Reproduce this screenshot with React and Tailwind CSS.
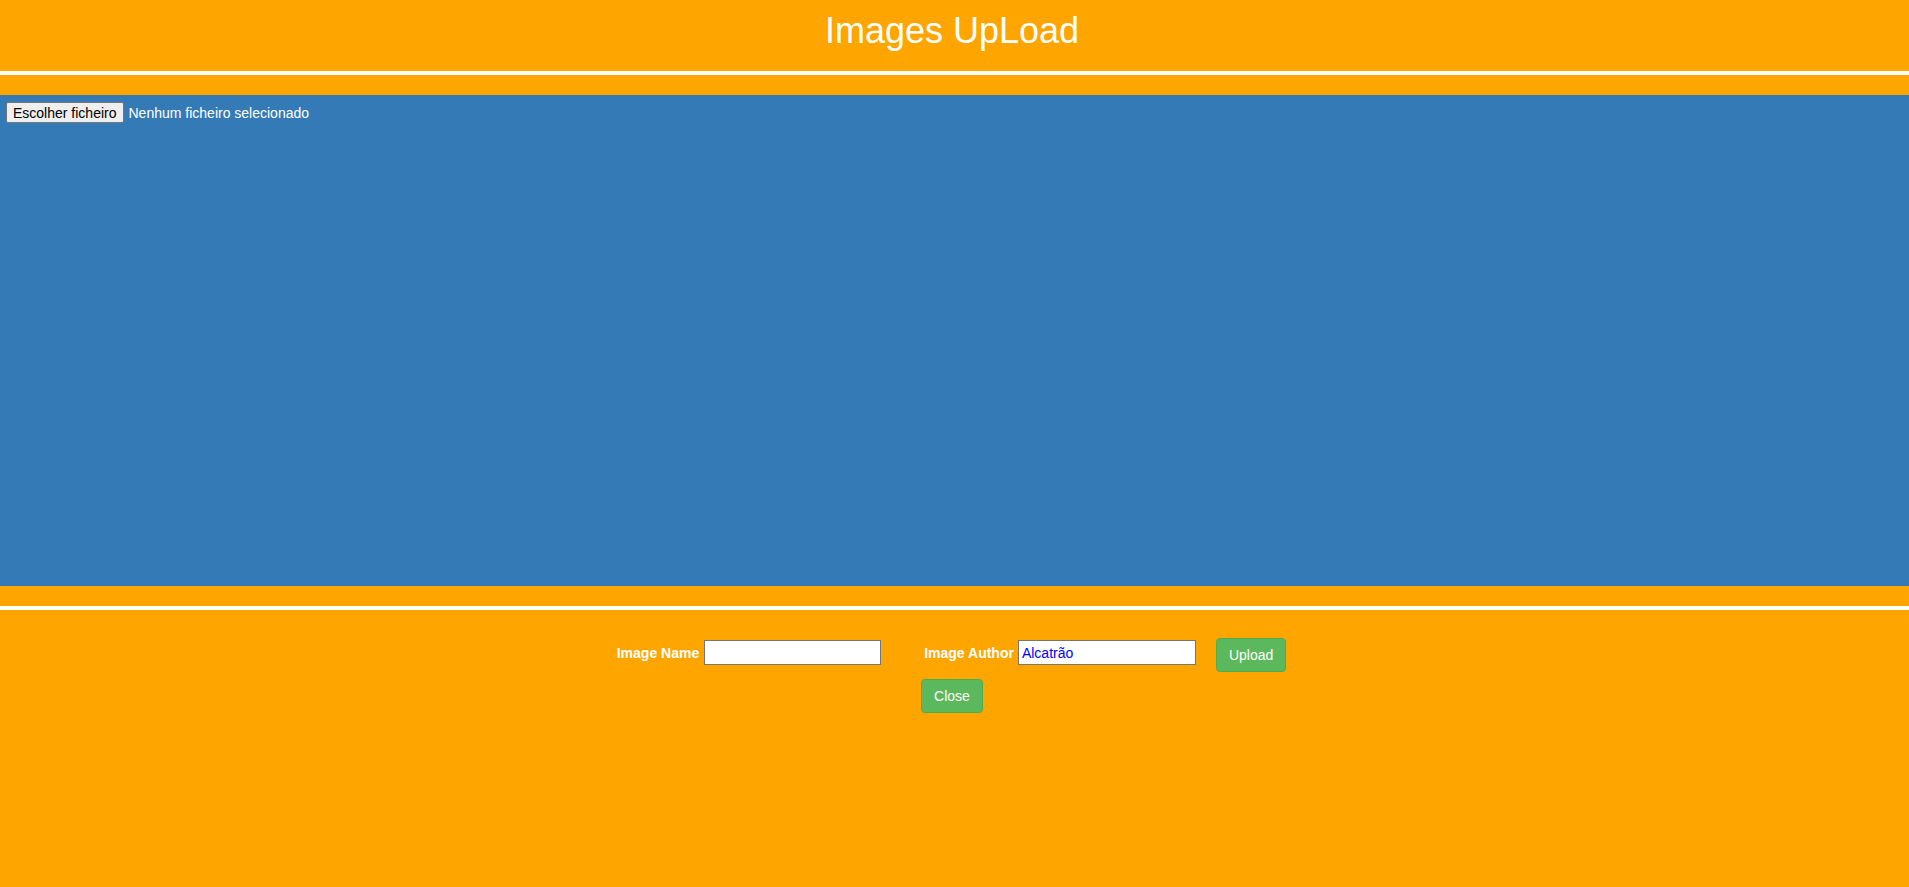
import React, { useState } from 'react';

export default function App() {
  const [name, setName] = useState('');
  const [author, setAuthor] = useState('Alcatrão');

  return (
    <div className="min-h-screen bg-[#ffa500] font-['Liberation_Sans',Arial,sans-serif] text-white">
      {/* Header */}
      <div className="h-[71px] pt-[11px] pr-[5px] text-center">
        <h1 className="text-[36px] leading-[40px] font-normal">Images UpLoad</h1>
      </div>
      <div className="h-[4px] bg-white" />
      <div className="h-[20px]" />

      {/* Upload area */}
      <div className="h-[491px] bg-[#337ab7] pt-[7px] pl-[6px]">
        <div className="flex items-center">
          <button className="h-[21px] px-[6px] bg-[#efefef] border border-[#767676] rounded-[2px] text-black text-[14px] leading-[16px]">
            Escolher ficheiro
          </button>
          <span className="ml-[5px] text-[14px] leading-[16px]">Nenhum ficheiro selecionado</span>
        </div>
      </div>

      <div className="h-[20px]" />
      <div className="h-[4px] bg-white" />

      {/* Form */}
      <div className="pt-[28px]">
        <div className="flex items-start justify-center pr-[6px]">
          <label className="mt-[5px] text-[14px] leading-[20px] font-bold">Image Name</label>
          <input
            value={name}
            onChange={(e) => setName(e.target.value)}
            className="ml-[5px] mt-[2px] w-[177px] h-[25px] px-[3px] bg-white border border-[#767676] text-[14px] text-[#0000ff] outline-none"
          />
          <label className="ml-[43px] mt-[5px] text-[14px] leading-[20px] font-bold">Image Author</label>
          <input
            value={author}
            onChange={(e) => setAuthor(e.target.value)}
            className="ml-[4px] mt-[2px] w-[178px] h-[25px] px-[3px] bg-white border border-[#767676] text-[14px] text-[#0000ff] outline-none"
          />
          <button className="ml-[20px] h-[34px] px-[12px] bg-[#5cb85c] border border-[#4cae4c] rounded-[4px] text-[14px] leading-[20px]">
            Upload
          </button>
        </div>
        <div className="flex justify-center mt-[7px] pr-[5px]">
          <button className="h-[34px] px-[12px] bg-[#5cb85c] border border-[#4cae4c] rounded-[4px] text-[14px] leading-[20px]">
            Close
          </button>
        </div>
      </div>
    </div>
  );
}
